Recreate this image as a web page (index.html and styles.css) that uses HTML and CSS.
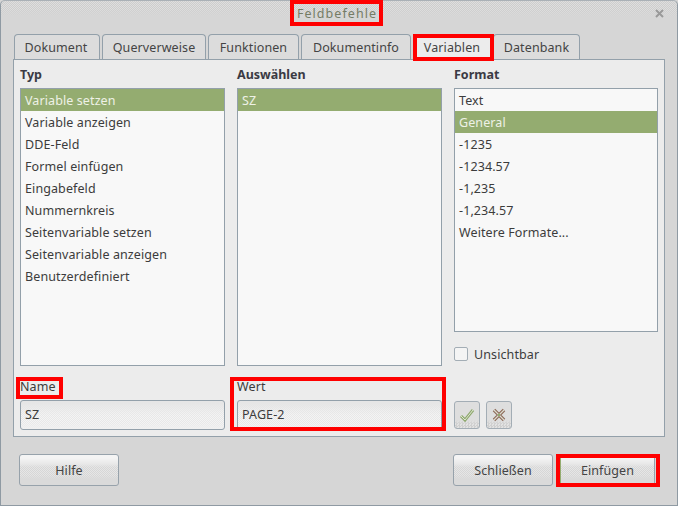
FILE: index.html
```html
<!DOCTYPE html>
<html lang="de">
<head>
    <meta charset="UTF-8">
    <title>Feldbefehle</title>
    <link rel="stylesheet" href="styles.css">
</head>
<body>

    <div class="dialog">
        <div class="titlebar">
            <span class="title">Feldbefehle</span>
            <svg class="close" width="9" height="9" viewBox="0 0 9 9"><path d="M1 1L8 8M8 1L1 8" stroke="#9a9a9a" stroke-width="2"/></svg>
        </div>

        <div class="tabs">
            <div class="tab tab-dokument">Dokument</div>
            <div class="tab tab-quer">Querverweise</div>
            <div class="tab tab-funk">Funktionen</div>
            <div class="tab tab-info">Dokumentinfo</div>
            <div class="tab tab-var active">Variablen</div>
            <div class="tab tab-db">Datenbank</div>
        </div>

        <div class="panel">
            <div class="column">
                <div class="heading">Typ</div>
                <ul class="list list-tall">
                    <li class="selected">Variable setzen</li>
                    <li>Variable anzeigen</li>
                    <li>DDE-Feld</li>
                    <li>Formel einfügen</li>
                    <li>Eingabefeld</li>
                    <li>Nummernkreis</li>
                    <li>Seitenvariable setzen</li>
                    <li>Seitenvariable anzeigen</li>
                    <li>Benutzerdefiniert</li>
                </ul>
                <div class="field-label">Name</div>
                <div class="input">SZ</div>
            </div>

            <div class="column">
                <div class="heading">Auswählen</div>
                <ul class="list list-tall">
                    <li class="selected">SZ</li>
                </ul>
                <div class="field-label">Wert</div>
                <div class="input">PAGE-2</div>
            </div>

            <div class="column">
                <div class="heading">Format</div>
                <ul class="list list-short">
                    <li>Text</li>
                    <li class="selected">General</li>
                    <li>-1235</li>
                    <li>-1234.57</li>
                    <li>-1,235</li>
                    <li>-1,234.57</li>
                    <li>Weitere Formate...</li>
                </ul>
                <label class="check-row"><span class="checkbox"></span>Unsichtbar</label>
                <div class="icon-buttons">
                    <div class="icon-btn">
                        <svg width="16" height="14" viewBox="0 0 16 14"><path d="M2 8L6 12L14 2" fill="none" stroke="#8fa96f" stroke-width="3"/><path d="M2 8L6 12L14 2" fill="none" stroke="#dfe6d2" stroke-width="1"/></svg>
                    </div>
                    <div class="icon-btn">
                        <svg width="14" height="14" viewBox="0 0 14 14"><path d="M2 2L12 12M12 2L2 12" fill="none" stroke="#8d6a58" stroke-width="3.5"/><path d="M2 2L12 12M12 2L2 12" fill="none" stroke="#dcdcd0" stroke-width="1.2"/><circle cx="7" cy="7" r="1.2" fill="#8fa96f"/></svg>
                    </div>
                </div>
            </div>
        </div>

        <div class="footer">
            <button class="btn">Hilfe</button>
            <div class="footer-right">
                <button class="btn">Schließen</button>
                <button class="btn btn-default">Einfügen</button>
            </div>
        </div>

        <!-- Red annotation boxes -->
        <div class="mark mark-title"></div>
        <div class="mark mark-tab"></div>
        <div class="mark mark-name"></div>
        <div class="mark mark-wert"></div>
        <div class="mark mark-insert"></div>
    </div>

</body>
</html>
```

FILE: styles.css
```css
/* Basic Reset */
* {
    margin: 0;
    padding: 0;
    box-sizing: border-box;
}

body {
    font-family: "Noto Sans", "Open Sans", sans-serif;
    font-size: 12.5px;
    letter-spacing: 0.1px;
    color: #3c3c3c;
    background: #d6d6d6;
    width: 678px;
    height: 506px;
    overflow: hidden;
}

/* Window */
.dialog {
    position: relative;
    width: 678px;
    height: 506px;
    border: 1px solid #8f9aa3;
    border-top-color: #a9b0b6;
    border-radius: 5px 5px 0 0;
    background: #d6d6d6;
}

.titlebar {
    height: 33px;
    padding: 4px 4px 0 0;
    text-align: center;
    background:
        linear-gradient(transparent 8px, #d6d6d6 16px),
        repeating-conic-gradient(#cdcdcd 0 25%, #dedede 0 50%) 0 0 / 2px 2px;
    border-radius: 5px 5px 0 0;
    position: relative;
}

.title {
    color: #757c66;
    letter-spacing: 1.05px;
}

.close {
    position: absolute;
    top: 8px;
    right: 13px;
}

/* Tabs */
.tabs {
    display: flex;
    height: 25px;
    padding-left: 13px;
}

.tab {
    height: 25px;
    margin-right: 2px;
    padding-top: 4px;
    text-align: center;
    border: 1px solid #93a0aa;
    border-bottom: none;
    border-radius: 4px 4px 0 0;
    background: #dcdcdc;
    color: #444;
}

.tab-dokument { width: 86px; padding-right: 2px; }
.tab-quer { width: 104px; }
.tab-funk { width: 91px; }
.tab-info { width: 110px; }
.tab-var { width: 80px; margin-right: 0; padding-right: 2px; }
.tab-db { width: 87px; }

.tab.active {
    height: 26px;
    background: #ececec;
    border-color: #ececec;
    position: relative;
    z-index: 1;
}

/* Tab panel */
.panel {
    display: grid;
    grid-template-columns: 205px 205px 204px;
    column-gap: 12px;
    width: 652px;
    height: 378px;
    margin-left: 12px;
    padding: 0 6px;
    background: #ececec;
    border: 1px solid #93a0aa;
}

.column {
    display: flex;
    flex-direction: column;
}

.heading {
    height: 28px;
    padding-top: 6px;
    font-weight: bold;
    letter-spacing: 0;
    color: #3a3a44;
}

.list {
    list-style: none;
    background: #f8f8f8;
    border: 1px solid #93a0aa;
}

.list-tall { height: 278px; }
.list-short { height: 244px; }

.list li {
    height: 22px;
    line-height: 24px;
    padding-left: 4px;
    white-space: nowrap;
}

.list li.selected {
    background: #94ac70;
    color: #eef1e6;
}

.field-label {
    height: 34px;
    padding-top: 12px;
}

.input {
    height: 30px;
    line-height: 28px;
    padding-left: 4px;
    border: 1px solid #93a0aa;
    border-radius: 3px;
    background:
        linear-gradient(#e6e6e6 2px, transparent 14px, transparent 22px, #f0f0f0 28px),
        repeating-conic-gradient(#e8e8e8 0 25%, #f4f4f4 0 50%) 0 0 / 2px 2px;
}

.check-row {
    display: flex;
    align-items: center;
    height: 16px;
    margin-top: 14px;
}

.checkbox {
    width: 14px;
    height: 14px;
    margin-right: 6px;
    border: 1px solid #a3adb5;
    border-radius: 2px;
    background: #f4f4f4;
}

.icon-buttons {
    display: flex;
    gap: 6px;
    margin-top: 39px;
}

.icon-btn {
    display: flex;
    align-items: center;
    justify-content: center;
    width: 26px;
    height: 28px;
    border: 1px solid #a3adb5;
    border-radius: 3px;
    background:
        linear-gradient(#dedede 18px, transparent 22px),
        repeating-conic-gradient(#cfcfcf 0 25%, #e2e2e2 0 50%) 0 0 / 3px 3px;
}

/* Bottom buttons */
.footer {
    display: flex;
    justify-content: space-between;
    padding: 17px 22px 0 18px;
}

.footer-right {
    display: flex;
    gap: 7px;
}

.btn {
    width: 100px;
    height: 32px;
    font-family: inherit;
    font-size: inherit;
    letter-spacing: inherit;
    color: #444;
    border: 1px solid #97a2ab;
    border-radius: 3px;
    background:
        linear-gradient(#f4f4f4 3px, #e8e8e8 9px, transparent 12px, transparent 20px, #dadada 24px),
        repeating-conic-gradient(#d6d6d6 0 25%, #e6e6e6 0 50%) 0 0 / 2px 2px;
}

.btn-default {
    width: 95px;
    border-left: 1px solid #94ac70;
}

/* Red annotation boxes */
.mark {
    position: absolute;
    z-index: 2;
    border: 4px solid #ff0000;
}

.mark-title { left: 289px; top: -1px; width: 93px; height: 26px; }
.mark-tab { left: 412px; top: 33px; width: 81px; height: 27px; }
.mark-name { left: 15px; top: 376px; width: 47px; height: 22px; }
.mark-wert { left: 229px; top: 376px; width: 216px; height: 54px; }
.mark-insert { left: 555px; top: 453px; width: 104px; height: 33px; }
```
